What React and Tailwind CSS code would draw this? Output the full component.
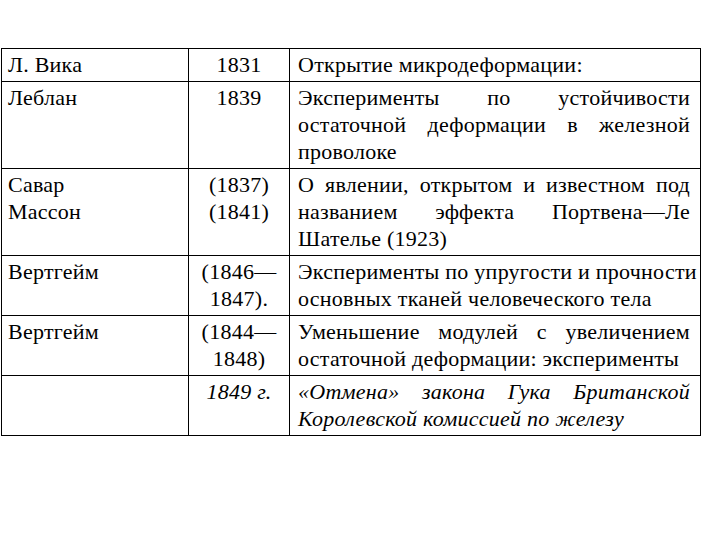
import React from "react";

const J = ({ lines, italic }) => (
  <div className={italic ? "italic" : ""}>
    {lines.map((l, i) => (
      <div
        key={i}
        className={
          i < lines.length - 1
            ? "whitespace-nowrap text-justify [text-align-last:justify]"
            : "whitespace-nowrap text-left"
        }
      >
        {l}
      </div>
    ))}
  </div>
);

const rows = [
  {
    a: ["Л. Вика"],
    b: ["1831"],
    c: ["Открытие микродеформации:"],
  },
  {
    a: ["Леблан"],
    b: ["1839"],
    c: [
      "Эксперименты по устойчивости",
      "остаточной деформации в железной",
      "проволоке",
    ],
  },
  {
    a: ["Савар", "Массон"],
    b: ["(1837)", "(1841)"],
    c: [
      "О явлении, открытом и известном под",
      "названием эффекта Портвена—Ле",
      "Шателье (1923)",
    ],
  },
  {
    a: ["Вертгейм"],
    b: ["(1846—", "1847)."],
    c: [
      "Эксперименты по упругости и прочности",
      "основных тканей человеческого тела",
    ],
  },
  {
    a: ["Вертгейм"],
    b: ["(1844—", "1848)"],
    c: [
      "Уменьшение модулей с увеличением",
      "остаточной деформации: эксперименты",
    ],
  },
  {
    a: [],
    b: ["1849 г."],
    c: [
      "«Отмена» закона Гука Британской",
      "Королевской комиссией по железу",
    ],
    italic: true,
  },
];

const cell =
  "border border-black align-top pt-[2px] pb-[3px] text-black font-['Liberation_Serif','Times_New_Roman',serif] text-[22px] leading-[27px] tracking-[0.25px]";

export default function App() {
  return (
    <div className="w-[720px] h-[540px] bg-white pt-[48px] pl-[1px]">
      <table className="w-[699px] border-collapse table-fixed">
        <colgroup>
          <col className="w-[187px]" />
          <col className="w-[101px]" />
          <col className="w-[411px]" />
        </colgroup>
        <tbody>
          {rows.map((r, i) => (
            <tr key={i}>
              <td className={cell + " pl-[6px] pr-[4px]"}>
                {r.a.map((x, j) => (
                  <div key={j}>{x}</div>
                ))}
              </td>
              <td
                className={
                  cell + " text-center px-[2px]" + (r.italic ? " italic" : "")
                }
              >
                {r.b.map((x, j) => (
                  <div key={j}>{x}</div>
                ))}
              </td>
              <td className={cell + " pl-[8px] pr-[10px]"}>
                <J lines={r.c} italic={r.italic} />
              </td>
            </tr>
          ))}
        </tbody>
      </table>
    </div>
  );
}
